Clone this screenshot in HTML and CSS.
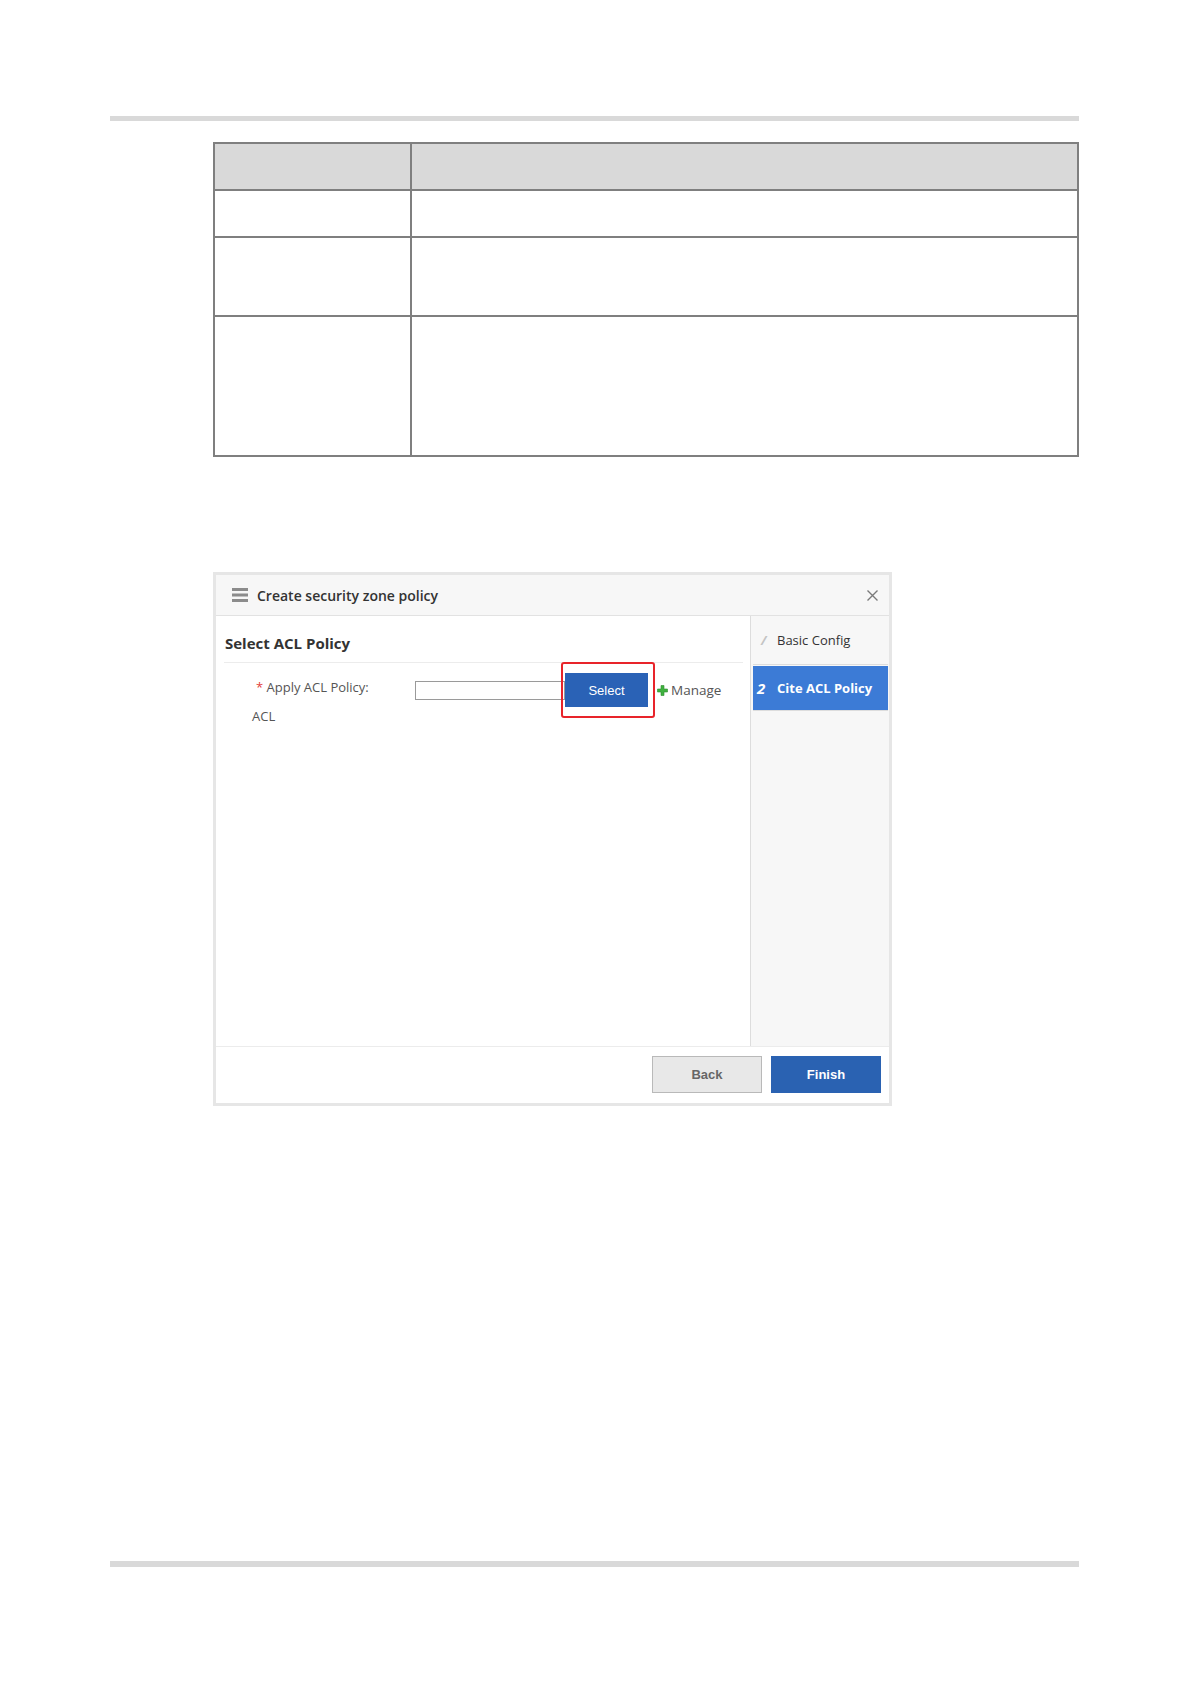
FILE: index.html
```html
<!DOCTYPE html>
<html lang="en">
<head>
<meta charset="utf-8">
<title>Create security zone policy</title>
<link rel="stylesheet" href="styles.css">
</head>
<body>
<div class="page">
  <div class="rule"></div>

  <table class="params">
    <colgroup><col class="c1"><col class="c2"></colgroup>
    <tr class="r-head"><td></td><td></td></tr>
    <tr class="r-1"><td></td><td></td></tr>
    <tr class="r-2"><td></td><td></td></tr>
    <tr class="r-3"><td></td><td></td></tr>
  </table>

  <div class="dialog">
    <div class="dlg-head">
      <svg class="menu-icon" width="16" height="14" viewBox="0 0 16 14">
        <rect x="0" y="0" width="16" height="3" fill="#8c8c8c"/>
        <rect x="0" y="5.5" width="16" height="3" fill="#8c8c8c"/>
        <rect x="0" y="11" width="16" height="3" fill="#8c8c8c"/>
      </svg>
      <span class="dlg-title">Create security zone policy</span>
      <svg class="close-icon" width="11" height="11" viewBox="0 0 11 11">
        <path d="M0.5 0.5 L10.5 10.5 M10.5 0.5 L0.5 10.5" stroke="#7a7a7a" stroke-width="1.4" fill="none"/>
      </svg>
    </div>

    <div class="dlg-body">
      <div class="main">
        <div class="section-title">Select ACL Policy</div>
        <div class="form-row">
          <div class="label"><span class="req">*</span> Apply ACL Policy:</div>
          <input class="field" type="text">
          <div class="btn-wrap">
            <button class="btn btn-select">Select</button>
            <div class="highlight"></div>
          </div>
          <div class="manage">
            <svg class="plus-icon" width="11" height="11" viewBox="0 0 11 11">
              <path d="M4 0.5 H7 V4 H10.5 V7 H7 V10.5 H4 V7 H0.5 V4 H4 Z" fill="#3fb13f" stroke="#2f8f2f" stroke-width="0.6"/>
            </svg>
            <span>Manage</span>
          </div>
        </div>
        <div class="acl">ACL</div>
      </div>

      <div class="steps">
        <div class="step">
          <span class="step-num">/</span>
          <span class="step-text">Basic Config</span>
        </div>
        <div class="step active">
          <span class="step-num">2</span>
          <span class="step-text">Cite ACL Policy</span>
        </div>
      </div>
    </div>

    <div class="dlg-foot">
      <button class="btn btn-back">Back</button>
      <button class="btn btn-finish">Finish</button>
    </div>
  </div>

  <div class="rule rule-bottom"></div>
</div>
</body>
</html>
```

FILE: styles.css
```css
html, body {
  margin: 0;
  padding: 0;
  background: #ffffff;
}

body {
  font-family: "Open Sans", "Liberation Sans", sans-serif;
  color: #333333;
}

.page {
  width: 1191px;
  height: 1684px;
  box-sizing: border-box;
  padding-top: 116px;
}

.rule {
  margin-left: 110px;
  width: 969px;
  height: 5px;
  background: #d9d9d9;
}

.rule-bottom {
  height: 6px;
  margin-top: 455px;
}

/* parameter table */
.params {
  margin: 21px 0 0 213px;
  border-collapse: collapse;
  width: 866px;
  table-layout: fixed;
}

.params td {
  border: 2px solid #7f7f7f;
  padding: 0;
}

.params .c1 { width: 197px; }

.r-head td { background: #d9d9d9; height: 45px; }
.r-1 td { height: 45px; }
.r-2 td { height: 77px; }
.r-3 td { height: 138px; }

/* dialog */
.dialog {
  margin: 115px 0 0 213px;
  width: 679px;
  height: 534px;
  box-sizing: border-box;
  border: 3px solid #e6e6e6;
  display: flex;
  flex-direction: column;
  background: #ffffff;
}

.dlg-head {
  height: 40px;
  flex: none;
  background: #f7f7f7;
  border-bottom: 1px solid #e2e2e2;
  display: flex;
  align-items: center;
  padding: 0 11px 0 16px;
}

.menu-icon { flex: none; }

.dlg-title {
  margin-left: 9px;
  font-size: 14px;
  font-weight: 600;
  color: #333333;
  flex: 1;
}

.close-icon { flex: none; }

.dlg-body {
  flex: 1;
  display: flex;
  min-height: 0;
}

.main {
  flex: 1;
  padding: 0 7px 0 8px;
}

.section-title {
  padding-top: 17px;
  padding-left: 1px;
  height: 29px;
  font-size: 15px;
  font-weight: 700;
  color: #333333;
  border-bottom: 1px solid #ececec;
}

.form-row {
  display: flex;
  align-items: center;
  height: 34px;
  margin-top: 10px;
  padding-left: 32px;
}

.label {
  width: 159px;
  flex: none;
  font-size: 13px;
  color: #555555;
  padding-bottom: 7px;
}

.req {
  color: #e2403a;
}

.field {
  width: 150px;
  height: 19px;
  box-sizing: border-box;
  border: 1px solid #9a9a9a;
  margin: 0;
  padding: 0;
  background: #ffffff;
  flex: none;
}

.btn-wrap {
  position: relative;
  flex: none;
}

.btn {
  font-family: "Liberation Sans", Arial, sans-serif;
  font-size: 13px;
  cursor: pointer;
  box-sizing: border-box;
  padding: 0;
}

.btn-select {
  display: block;
  width: 83px;
  height: 34px;
  background: #2a62b6;
  color: #ffffff;
  border: none;
}

.highlight {
  position: absolute;
  left: -4px;
  top: -11px;
  right: -7px;
  bottom: -11px;
  border: 2px solid #e8242a;
  border-radius: 3px;
}

.manage {
  margin-left: 9px;
  display: flex;
  align-items: center;
  font-size: 13.5px;
  color: #555555;
}

.plus-icon { margin-right: 3px; }

.acl {
  padding-left: 28px;
  margin-top: 0;
  font-size: 13px;
  color: #555555;
}

/* steps sidebar */
.steps {
  width: 135px;
  flex: none;
  border-left: 1px solid #dddddd;
  background: #f7f7f7;
  padding: 0 1px 0 2px;
}

.step {
  height: 48px;
  border-bottom: 1px solid #dddddd;
  display: flex;
  align-items: center;
  padding-left: 8px;
  margin-bottom: 1px;
  font-size: 13px;
  color: #333333;
}

.step-num {
  width: 16px;
  font-style: italic;
  font-weight: 700;
  color: #c4c4c4;
}

.step.active {
  height: 44px;
  background: #3c7bd6;
  color: #ffffff;
  font-weight: 700;
  padding-left: 4px;
}

.step.active .step-num {
  color: #ffffff;
  width: 20px;
  font-size: 15px;
}

/* footer */
.dlg-foot {
  height: 57px;
  flex: none;
  box-sizing: border-box;
  border-top: 1px solid #ececec;
  display: flex;
  justify-content: flex-end;
  align-items: flex-start;
  padding: 9px 8px 0 0;
  gap: 9px;
}

.btn-back {
  width: 110px;
  height: 37px;
  background: #e8e8e8;
  border: 1px solid #b9b9b9;
  color: #666666;
  font-weight: 700;
}

.btn-finish {
  width: 110px;
  height: 37px;
  background: #2a62b2;
  border: none;
  color: #ffffff;
  font-weight: 700;
}
```
